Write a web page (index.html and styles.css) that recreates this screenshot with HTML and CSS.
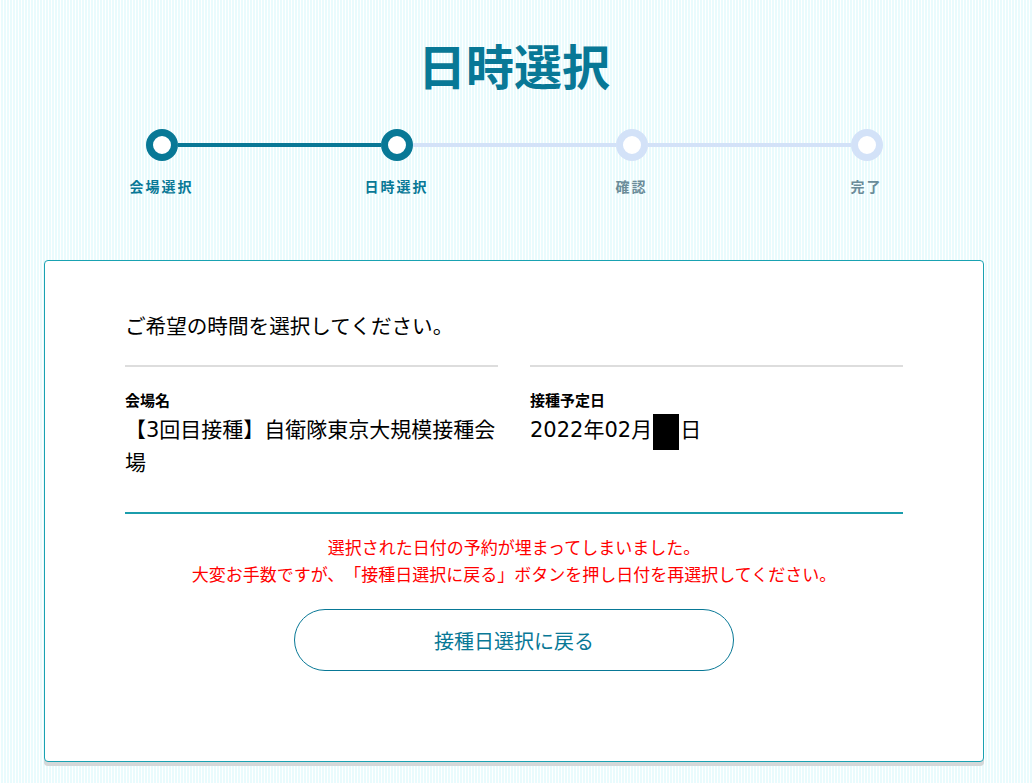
FILE: index.html
```html
<!DOCTYPE html>
<html lang="ja">

<head>
    <meta charset="UTF-8">
    <meta name="viewport" content="width=device-width, initial-scale=1.0">
    <title>日時選択</title>
    <link rel="stylesheet" href="styles.css">
</head>

<body>
    <main class="page">
        <h1 class="title">日時選択</h1>

        <ol class="steps">
            <li class="step done">
                <div class="track"><span class="dot"></span></div>
                <div class="step-label">会場選択</div>
            </li>
            <li class="step current">
                <div class="track"><span class="dot"></span></div>
                <div class="step-label">日時選択</div>
            </li>
            <li class="step">
                <div class="track"><span class="dot"></span></div>
                <div class="step-label">確認</div>
            </li>
            <li class="step">
                <div class="track"><span class="dot"></span></div>
                <div class="step-label">完了</div>
            </li>
        </ol>

        <section class="card">
            <p class="intro">ご希望の時間を選択してください。</p>

            <div class="info">
                <div class="info-col">
                    <div class="info-label">会場名</div>
                    <div class="info-value">【3回目接種】自衛隊東京大規模接種会場</div>
                </div>
                <div class="info-col">
                    <div class="info-label">接種予定日</div>
                    <div class="info-value">2022年02月<span class="redact"></span>日</div>
                </div>
            </div>

            <div class="notice">
                <p>選択された日付の予約が埋まってしまいました。</p>
                <p>大変お手数ですが、「接種日選択に戻る」ボタンを押し日付を再選択してください。</p>
            </div>

            <div class="actions">
                <button class="back-btn" type="button">接種日選択に戻る</button>
            </div>
        </section>
    </main>
</body>

</html>
```

FILE: styles.css
```css
* {
    box-sizing: border-box;
    margin: 0;
    padding: 0;
}

body {
    font-family: "DejaVu Sans", "Noto Sans CJK JP", sans-serif;
    color: #000;
    min-height: 783px;
    padding-right: 4px;
    text-spacing-trim: space-all;
    background: repeating-linear-gradient(90deg, #ffffff 0 1px, #e9fbfd 1px 3px);
}

.page {
    width: 940px;
    margin: 0 auto;
}

.title {
    padding-top: 35px;
    font-size: 48px;
    line-height: 58px;
    font-weight: bold;
    text-align: center;
    color: #087896;
    font-family: "Noto Sans CJK JP", sans-serif;
}

/* progress */
.steps {
    display: flex;
    list-style: none;
    margin-top: 36px;
}

.step {
    flex: 1;
}

.track {
    display: flex;
    align-items: center;
}

.track::before,
.track::after {
    content: "";
    flex: 1;
    height: 4px;
    background: #d3e2f8;
}

.step:first-child .track::before,
.step:last-child .track::after {
    background: transparent;
}

.done .track::after,
.current .track::before {
    background: #087896;
}

.dot {
    width: 32px;
    height: 32px;
    border-radius: 50%;
    border: 7px solid #d3e2f8;
    background: #fff;
}

.done .dot,
.current .dot {
    border-color: #087896;
}

.step-label {
    margin-top: 15px;
    font-family: "Noto Sans CJK JP", sans-serif;
    font-size: 14px;
    line-height: 20px;
    font-weight: bold;
    letter-spacing: 2px;
    text-align: center;
    color: #6b8c99;
}

.done .step-label,
.current .step-label {
    color: #087896;
}

/* card */
.card {
    margin-top: 64px;
    padding: 51px 80px 90px;
    background: #fff;
    border: 1px solid #19a2b2;
    border-radius: 4px;
    box-shadow: 0 4px 0 #d4d8d9;
}

.intro {
    font-size: 20.6px;
    line-height: 30px;
    margin-bottom: 23px;
}

.info {
    display: grid;
    grid-template-columns: 1fr 1fr;
    column-gap: 32px;
    padding-bottom: 32px;
    border-bottom: 2px solid #1b9dac;
}

.info-col {
    border-top: 2px solid #dddddd;
    padding-top: 22px;
}

.info-label {
    font-family: "Noto Sans CJK JP", sans-serif;
    font-size: 15px;
    line-height: 22px;
    font-weight: bold;
}

.info-value {
    margin-top: 3px;
    font-size: 21px;
    line-height: 33px;
}

.redact {
    display: inline-block;
    width: 26px;
    height: 36px;
    margin: 0 1px -4px;
    background: #000;
    vertical-align: top;
}

.notice {
    padding-top: 21px;
    text-align: center;
    color: #ff0000;
    font-size: 17px;
    line-height: 27px;
}

.actions {
    display: flex;
    justify-content: center;
    margin-top: 20px;
}

.back-btn {
    width: 440px;
    height: 62px;
    border: 1px solid #087896;
    border-radius: 31px;
    background: #fff;
    color: #087896;
    font-family: "Noto Sans CJK JP", sans-serif;
    font-size: 20px;
    cursor: pointer;
}
```
